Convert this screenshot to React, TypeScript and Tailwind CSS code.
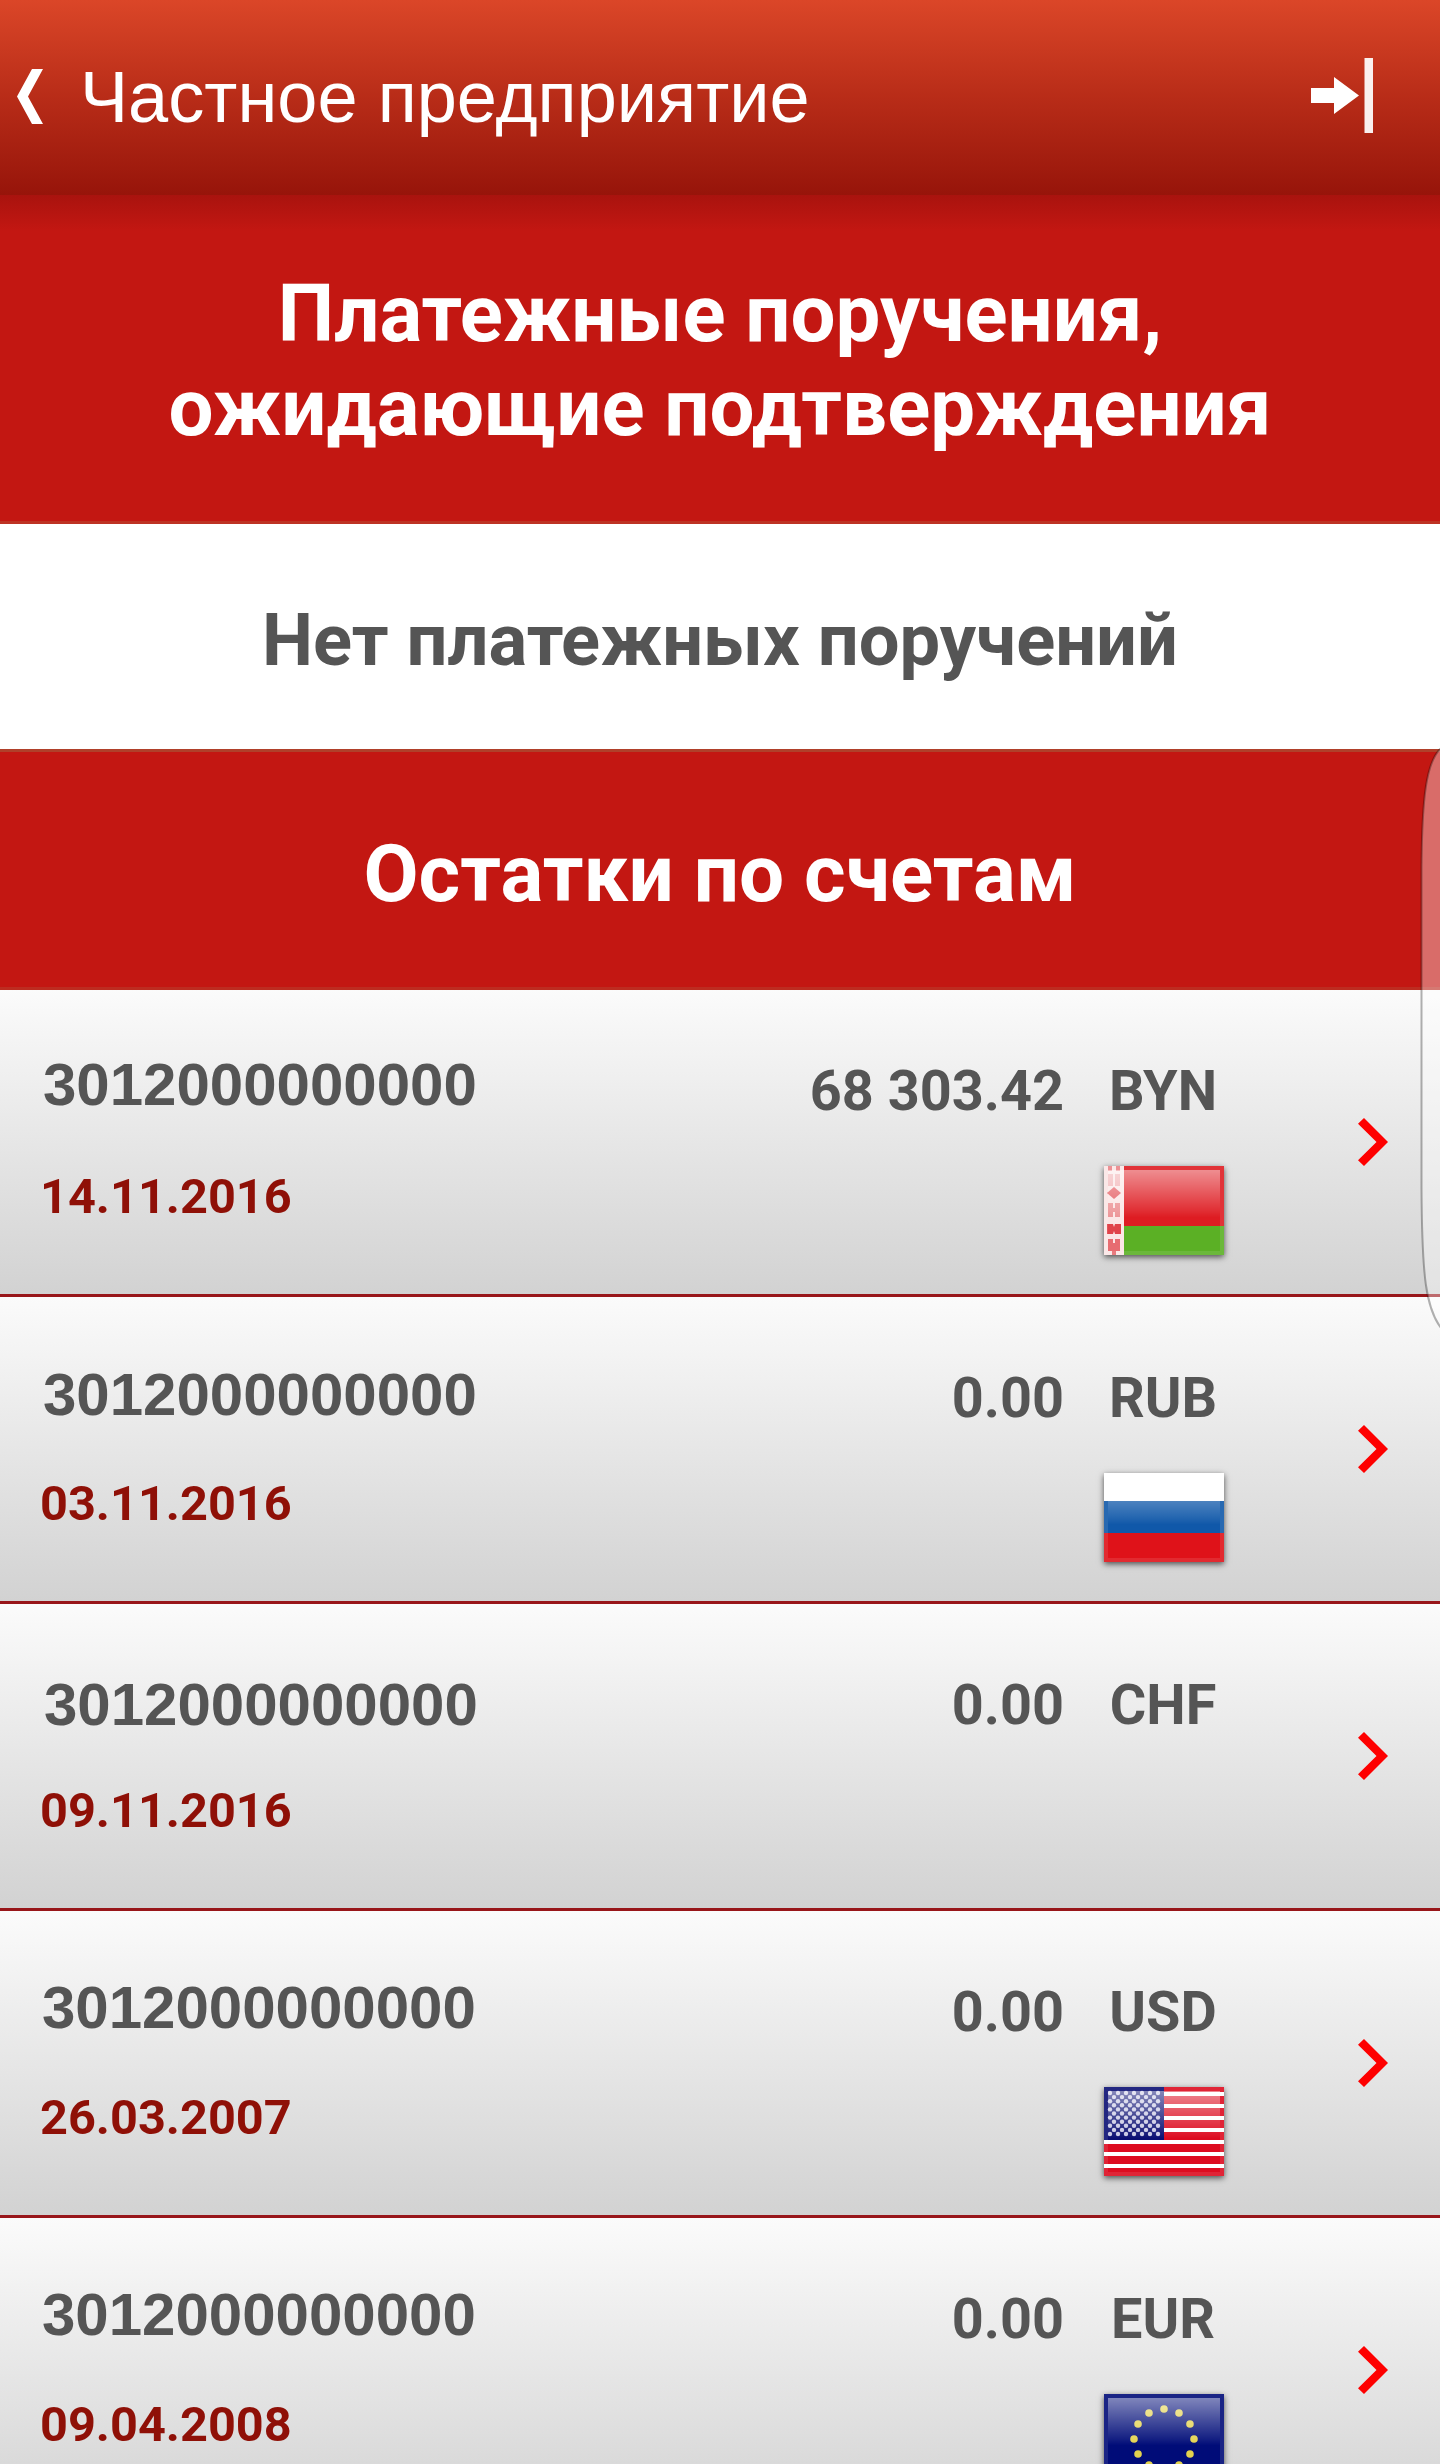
import type { ReactNode } from "react";

interface Account {
  number: string;
  numberClass: string;
  date: string;
  amount: string;
  currency: string;
  flag: ReactNode;
}

function FlagShape({ children }: { children: ReactNode }) {
  return (
    <div className="h-[89px] w-[120px] shadow-[0_2px_6px_rgba(0,0,0,0.65)]">
      <svg viewBox="0 0 120 89" className="block h-[89px] w-[120px] blur-[0.7px]">
        <defs>
          <linearGradient id="gloss" x1="0" y1="0" x2="0" y2="1">
            <stop offset="0" stopColor="#fff" stopOpacity="0.5" />
            <stop offset="0.5" stopColor="#fff" stopOpacity="0.08" />
            <stop offset="0.58" stopColor="#fff" stopOpacity="0" />
          </linearGradient>
        </defs>
        {children}
        <rect x="4" y="4" width="112" height="82" fill="url(#gloss)" />
        <rect x="2" y="2" width="116" height="85" fill="none" stroke="#fff" strokeOpacity="0.1" strokeWidth="4" />
      </svg>
    </div>
  );
}

function BelarusFlag() {
  return (
    <FlagShape>
      <rect width="120" height="60" fill="#de1c22" />
      <rect y="60" width="120" height="29" fill="#5bb025" />
      <rect width="20" height="89" fill="#fbe6e6" />
      <g fill="#e0434a">
        <path d="M4 0h4v5H4zM12 0h4v5h-4z" opacity="0.6" />
        <path d="M4 8h5v12H4zM11 8h5v12h-5z" opacity="0.35" />
        <path d="M10 21l7 6-7 6-7-6z" opacity="0.85" />
        <path d="M4 37h5v14H4zM11 37h5v14h-5zM8 42h4v4H8z" opacity="0.5" />
        <path d="M3 58h6l1 3 1-3h6v10h-6l-1-3-1 3H3z" />
        <path d="M4 73h5v12H4zM11 73h5v12h-5zM8 77h4v12H8z" opacity="0.75" />
      </g>
    </FlagShape>
  );
}

function RussiaFlag() {
  return (
    <FlagShape>
      <rect width="120" height="89" fill="#fff" />
      <rect y="28" width="120" height="32" fill="#1058a9" />
      <rect y="60" width="120" height="29" fill="#df1219" />
    </FlagShape>
  );
}

function UsaFlag() {
  const stars: ReactNode[] = [];
  for (let row = 0; row < 11; row++) {
    for (let col = 0; col < (row % 2 ? 6 : 7); col++) {
      stars.push(
        <circle key={`${row}-${col}`} cx={6 + col * 8 + (row % 2 ? 4 : 0)} cy={6 + row * 4.1} r="2.2" />
      );
    }
  }
  return (
    <FlagShape>
      <rect width="120" height="89" fill="#fff" />
      <g fill="#dd0c20">
        <rect width="120" height="5" />
        {[9, 21, 33, 45, 57, 69, 81].map((y) => (
          <rect key={y} y={y} width="120" height="8" />
        ))}
      </g>
      <rect width="60" height="53" fill="#0b0f73" />
      <g fill="#c9c9e4">{stars}</g>
    </FlagShape>
  );
}

function EuropeFlag() {
  return (
    <FlagShape>
      <rect width="120" height="89" fill="#000c78" />
      <g fill="#e3d34e">
        {Array.from({ length: 12 }, (_, i) => {
          const angle = (i * Math.PI) / 6;
          return (
            <circle key={i} cx={60 + 30 * Math.sin(angle)} cy={45 - 30 * Math.cos(angle)} r="3.8" />
          );
        })}
      </g>
    </FlagShape>
  );
}

const accounts: Account[] = [
  {
    number: "3012000000000",
    numberClass: "pt-[65px] pl-[43px]",
    date: "14.11.2016",
    amount: "68 303.42",
    currency: "BYN",
    flag: <BelarusFlag />,
  },
  {
    number: "3012000000000",
    numberClass: "pt-[68px] pl-[43px]",
    date: "03.11.2016",
    amount: "0.00",
    currency: "RUB",
    flag: <RussiaFlag />,
  },
  {
    number: "3012000000000",
    numberClass: "pt-[71px] pl-[44px]",
    date: "09.11.2016",
    amount: "0.00",
    currency: "CHF",
    flag: null,
  },
  {
    number: "3012000000000",
    numberClass: "pt-[67px] pl-[42px]",
    date: "26.03.2007",
    amount: "0.00",
    currency: "USD",
    flag: <UsaFlag />,
  },
  {
    number: "3012000000000",
    numberClass: "pt-[67px] pl-[42px]",
    date: "09.04.2008",
    amount: "0.00",
    currency: "EUR",
    flag: <EuropeFlag />,
  },
];

function AccountRow({ account }: { account: Account }) {
  return (
    <li className="flex h-[307px] border-b-[3px] border-[#98161a] bg-linear-to-b from-[#fbfbfb] to-[#d2d2d2]">
      <div className="w-[600px]">
        <div
          className={`h-[183px] font-['Liberation_Sans',sans-serif] text-[60px] leading-[60px] font-bold text-[#555] ${account.numberClass}`}
        >
          {account.number}
        </div>
        <div className="pl-[40px] text-[48.7px] leading-[48px] font-bold text-[#8f1007]">
          {account.date}
        </div>
      </div>
      <div className="w-[464px] pt-[73px] text-right text-[55.8px] leading-[56px] font-bold text-[#555]">
        {account.amount}
      </div>
      <div className="w-[294px] pt-[73px] pl-[40px]">
        <div className="w-[118px] text-center text-[55.8px] leading-[56px] font-bold text-[#555]">
          {account.currency}
        </div>
        <div className="mt-[47px]">{account.flag}</div>
      </div>
      <svg viewBox="0 0 30 48" className="mt-[128px] h-[48px] w-[30px]">
        <path d="M6 0L30 24 6 48 0 42.3 18.5 24 0 5.7z" fill="#fe0000" />
      </svg>
    </li>
  );
}

export default function App() {
  return (
    <main className="relative h-[2464px] w-[1440px] overflow-hidden bg-white font-['Roboto',sans-serif]">
      <header className="flex h-[195px] bg-linear-to-b from-[#db4628] via-[#b82c18] via-50% to-[#97140a]">
        <svg viewBox="0 0 26 55" className="mt-[69px] ml-[17px] h-[55px] w-[26px]">
          <path d="M15 0H26L11 27.5 26 55H15L0 27.5z" fill="#fff" />
        </svg>
        <h1 className="mt-[59px] ml-[37px] w-[1231px] font-['Liberation_Sans',sans-serif] text-[72.2px] leading-[76px] text-white">
          Частное предприятие
        </h1>
        <svg viewBox="0 0 62 75" className="mt-[58px] h-[75px] w-[62px]">
          <path d="M0 30H23V19L48 37.5 23 56V45H0z" fill="#fff" />
          <rect x="53.5" width="8.5" height="75" fill="#fff" fillOpacity="0.93" />
        </svg>
      </header>

      <section className="h-[329px] border-b-[3px] border-[#bd3324] bg-[#c31712] bg-linear-to-b from-[#a9130e] to-[#c31712] to-[36px] pt-[72px] text-center text-[79.8px] leading-[94px] font-bold text-white">
        <h2>
          Платежные поручения,
          <br />
          ожидающие подтверждения
        </h2>
      </section>

      <p className="h-[225px] pt-[75px] text-center text-[72.3px] leading-[84px] font-bold text-[#555]">
        Нет платежных поручений
      </p>

      <h2 className="h-[241px] border-t-[3px] border-b-[3px] border-t-[#b0402a] border-b-[#bd2c20] bg-[#c31712] pt-[75px] text-center text-[80px] leading-[94px] font-bold text-white">
        Остатки по счетам
      </h2>

      <ul>
        {accounts.map((account) => (
          <AccountRow key={account.currency} account={account} />
        ))}
      </ul>

      {/* edge panel handle over the list */}
      <svg viewBox="0 0 20 582" className="absolute top-[748px] right-0 h-[582px] w-[20px]">
        <path
          d="M21 0C6 14 2 50 1.5 120V440C2 530 6 560 21 580"
          fill="#fff"
          fillOpacity="0.37"
          stroke="#000"
          strokeOpacity="0.3"
          strokeWidth="2"
        />
      </svg>
    </main>
  );
}
